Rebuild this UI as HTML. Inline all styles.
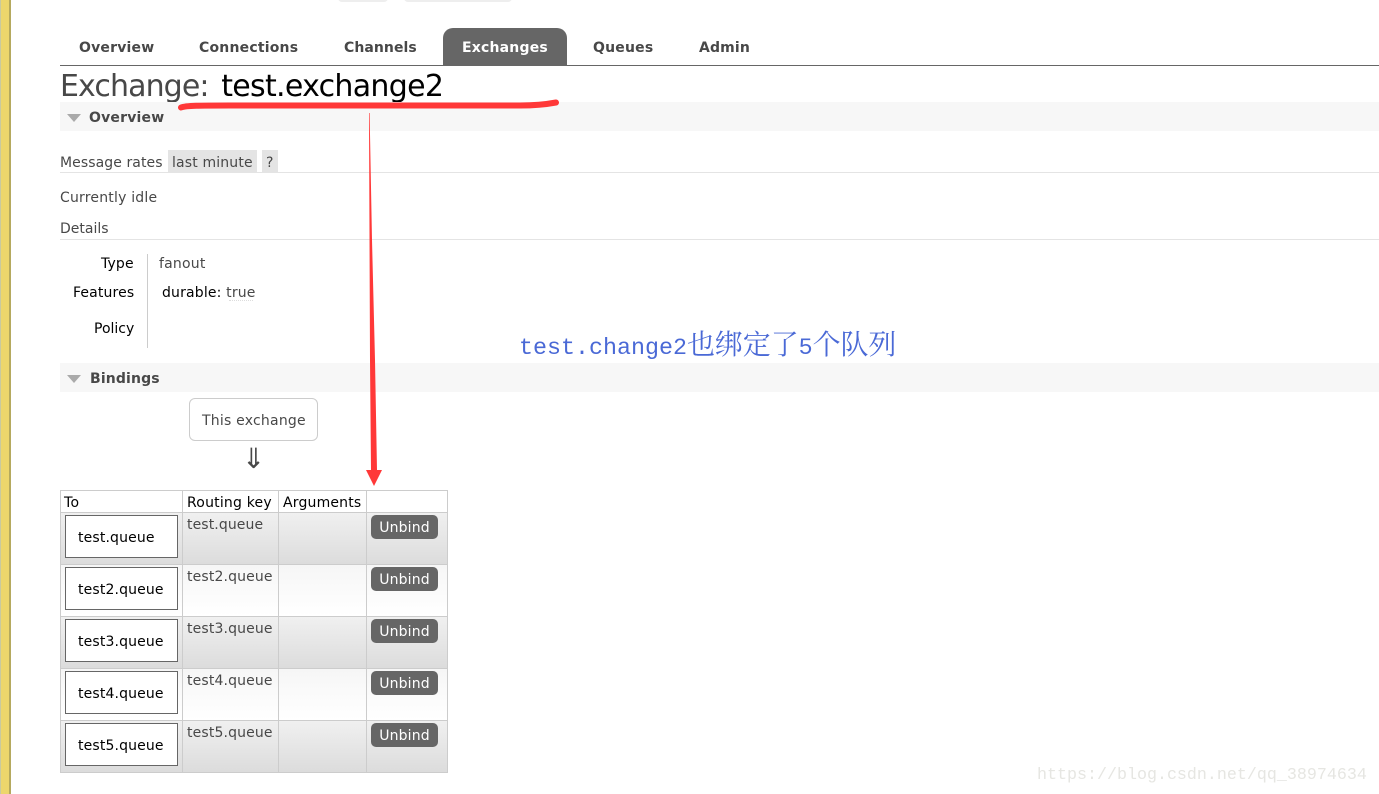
<!DOCTYPE html>
<html><head><meta charset="utf-8"><style>
html,body{margin:0;padding:0;background:#fff;width:1379px;height:794px;overflow:hidden}
.a{position:absolute;white-space:nowrap;font-family:"DejaVu Sans","Liberation Sans",sans-serif;font-size:14px;line-height:20px;color:#484848;letter-spacing:.14px}
.r{position:absolute}
.k{color:#000}
.b{font-weight:bold;letter-spacing:.12px;color:#484848;font-size:14px}
.box{position:absolute;left:65px;width:111px;height:41px;border:1px solid #666;background:#fff}
.btn{position:absolute;left:371px;width:67px;height:24px;border-radius:5px;background:#666;color:#fff;text-align:center;line-height:26px}
.cjk{font-family:"Liberation Mono","Noto Serif CJK SC",monospace}
</style></head><body>
<div class="r" style="left:0;top:0;width:1px;height:794px;background:#c9c9a0"></div>
<div class="r" style="left:1px;top:0;width:8px;height:794px;background:#edd66c"></div>
<div class="r" style="left:9px;top:0;width:2px;height:794px;background:#b5a95e"></div>
<div class="r" style="left:338px;top:-8px;width:50px;height:10px;border-radius:4px;background:#eee"></div>
<div class="r" style="left:404px;top:-8px;width:108px;height:10px;border-radius:4px;background:#eee"></div>

<div class="a b" style="left:79px;top:38px;letter-spacing:.2px">Overview</div>
<div class="a b" style="left:199px;top:38px;letter-spacing:.2px">Connections</div>
<div class="a b" style="left:344px;top:38px;letter-spacing:.07px">Channels</div>
<div class="r" style="left:443px;top:28px;width:124px;height:37px;background:#666;border-radius:10px 10px 0 0"></div>
<div class="a b" style="left:462px;top:38px;color:#fff;letter-spacing:.2px">Exchanges</div>
<div class="a b" style="left:593px;top:38px;letter-spacing:.2px">Queues</div>
<div class="a b" style="left:699px;top:38px;letter-spacing:.15px">Admin</div>
<div class="r" style="left:60px;top:65px;width:1319px;height:1px;background:#666"></div>

<div class="a" style="left:60px;top:68px;font-size:30px;line-height:38px;letter-spacing:-.9px">Exchange: <span class="k" style="margin-left:4px;letter-spacing:-.7px">test.exchange2</span></div>

<div class="r" style="left:60px;top:102px;width:1319px;height:29px;background:#f7f7f7"></div>
<div class="r" style="left:67px;top:114px;width:0;height:0;border-left:7px solid transparent;border-right:7px solid transparent;border-top:8px solid #aaa"></div>
<div class="a b" style="left:89px;top:108px;letter-spacing:.2px">Overview</div>

<div class="a" style="left:60px;top:153px;letter-spacing:.08px">Message rates</div>
<div class="r" style="left:168px;top:150px;width:89px;height:22px;background:#e4e4e4"></div>
<div class="a" style="left:172px;top:153px;letter-spacing:.15px">last minute</div>
<div class="r" style="left:262px;top:150px;width:16px;height:22px;background:#e4e4e4"></div>
<div class="a" style="left:266px;top:153px">?</div>
<div class="r" style="left:60px;top:172px;width:1319px;height:1px;background:#e4e4e4"></div>
<div class="a" style="left:60px;top:188px;letter-spacing:.2px">Currently idle</div>
<div class="a" style="left:60px;top:219px;letter-spacing:0">Details</div>
<div class="r" style="left:60px;top:239px;width:1319px;height:1px;background:#e4e4e4"></div>

<div class="a k" style="left:101px;top:254px">Type</div>
<div class="a k" style="left:73px;top:283px">Features</div>
<div class="a k" style="left:94px;top:319px;letter-spacing:0">Policy</div>
<div class="r" style="left:147px;top:254px;width:1px;height:94px;background:#ccc"></div>
<div class="a" style="left:159px;top:254px;letter-spacing:.2px">fanout</div>
<div class="a" style="left:162px;top:283px;letter-spacing:.17px"><span class="k">durable:</span> true</div>
<div class="r" style="left:229px;top:300px;width:24px;border-top:1px dotted #ddd"></div>

<div class="a cjk" style="left:519px;top:331px;color:#4a69d6;font-size:23.33px;line-height:34px;letter-spacing:0">test.change2<span style="font-size:28px;letter-spacing:-.1px">也绑定了</span>5<span style="font-size:28px;letter-spacing:-.1px">个队列</span></div>

<div class="r" style="left:60px;top:363px;width:1319px;height:29px;background:#f7f7f7"></div>
<div class="r" style="left:67px;top:375px;width:0;height:0;border-left:7px solid transparent;border-right:7px solid transparent;border-top:8px solid #aaa"></div>
<div class="a b" style="left:90px;top:369px;letter-spacing:.15px">Bindings</div>

<div class="r" style="left:189px;top:398px;width:127px;height:41px;border:1px solid #ccc;border-radius:6px;background:#fff"></div>
<div class="a" style="left:202px;top:411px;letter-spacing:.22px">This exchange</div>
<div class="a" style="left:242px;top:444px;font-size:28px;line-height:30px;letter-spacing:0">⇓</div>

<!-- table -->
<div class="r" style="left:60px;top:490px;width:388px;height:283px;background:#ccc"></div>
<div class="r" style="left:61px;top:491px;width:386px;height:21px;background:#fff"></div>
<div class="r" style="left:61px;top:513px;width:386px;height:51px;background:linear-gradient(#f0f0f0,#dcdcdc)"></div>
<div class="r" style="left:61px;top:565px;width:386px;height:51px;background:linear-gradient(#f6f6f6,#fff)"></div>
<div class="r" style="left:61px;top:617px;width:386px;height:51px;background:linear-gradient(#f0f0f0,#dcdcdc)"></div>
<div class="r" style="left:61px;top:669px;width:386px;height:51px;background:linear-gradient(#f6f6f6,#fff)"></div>
<div class="r" style="left:61px;top:721px;width:386px;height:51px;background:linear-gradient(#f0f0f0,#dcdcdc)"></div>
<div class="r" style="left:182px;top:490px;width:1px;height:283px;background:#ccc"></div>
<div class="r" style="left:278px;top:490px;width:1px;height:283px;background:#ccc"></div>
<div class="r" style="left:366px;top:490px;width:1px;height:283px;background:#ccc"></div>

<div class="a k" style="left:64px;top:493px;letter-spacing:.3px">To</div>
<div class="a k" style="left:187px;top:493px;letter-spacing:.2px">Routing key</div>
<div class="a k" style="left:283px;top:493px;letter-spacing:.18px">Arguments</div>

<div class="box" style="top:515px"></div><div class="a k" style="left:78px;top:528px">test.queue</div><div class="a" style="left:187px;top:515px;letter-spacing:.1px">test.queue</div><div class="a btn" style="top:515px">Unbind</div>
<div class="box" style="top:567px"></div><div class="a k" style="left:78px;top:580px">test2.queue</div><div class="a" style="left:187px;top:567px">test2.queue</div><div class="a btn" style="top:567px">Unbind</div>
<div class="box" style="top:619px"></div><div class="a k" style="left:78px;top:632px">test3.queue</div><div class="a" style="left:187px;top:619px">test3.queue</div><div class="a btn" style="top:619px">Unbind</div>
<div class="box" style="top:671px"></div><div class="a k" style="left:78px;top:684px">test4.queue</div><div class="a" style="left:187px;top:671px">test4.queue</div><div class="a btn" style="top:671px">Unbind</div>
<div class="box" style="top:723px"></div><div class="a k" style="left:78px;top:736px">test5.queue</div><div class="a" style="left:187px;top:723px">test5.queue</div><div class="a btn" style="top:723px">Unbind</div>

<svg class="r" style="left:0;top:0" width="1379" height="794">
<path d="M181 107.5C186 105.5 200 105.5 230 105.5L520 105.5C535 105.5 548 104 556 102.5" fill="none" stroke="#ff3838" stroke-width="6" stroke-linecap="round"/>
<path d="M369 113L369.6 113L372 240L375 360L377 470L382 470L374 486L366 470L371 470L370 360Z" fill="#ff3838"/>
</svg>

<div class="a cjk" style="left:1037px;top:765px;color:#e6e6e2;font-size:16.67px;line-height:22px;letter-spacing:0">https://blog.csdn.net/qq_38974634</div>
</body></html>
